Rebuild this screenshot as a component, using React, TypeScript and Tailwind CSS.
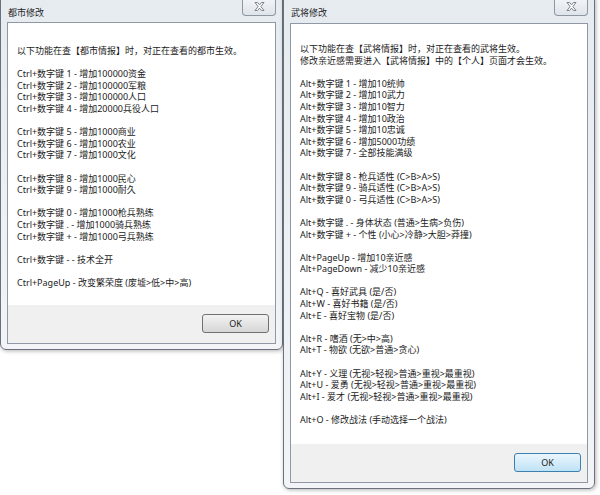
const font = { fontFamily: '"Noto Sans", "Noto Sans CJK SC", sans-serif' };

const cityLines: string[][] = [
  ["以下功能在查【都市情报】时，对正在查看的都市生效。"],
  [
    "Ctrl+数字键 1 - 增加100000资金",
    "Ctrl+数字键 2 - 增加100000军粮",
    "Ctrl+数字键 3 - 增加100000人口",
    "Ctrl+数字键 4 - 增加20000兵役人口",
  ],
  ["Ctrl+数字键 5 - 增加1000商业", "Ctrl+数字键 6 - 增加1000农业", "Ctrl+数字键 7 - 增加1000文化"],
  ["Ctrl+数字键 8 - 增加1000民心", "Ctrl+数字键 9 - 增加1000耐久"],
  [
    "Ctrl+数字键 0 - 增加1000枪兵熟练",
    "Ctrl+数字键 . - 增加1000骑兵熟练",
    "Ctrl+数字键 + - 增加1000弓兵熟练",
  ],
  ["Ctrl+数字键 - - 技术全开"],
  ["Ctrl+PageUp - 改变繁荣度 (废墟>低>中>高)"],
];

const officerLines: string[][] = [
  ["以下功能在查【武将情报】时，对正在查看的武将生效。", "修改亲近感需要进入【武将情报】中的【个人】页面才会生效。"],
  [
    "Alt+数字键 1 - 增加10统帅",
    "Alt+数字键 2 - 增加10武力",
    "Alt+数字键 3 - 增加10智力",
    "Alt+数字键 4 - 增加10政治",
    "Alt+数字键 5 - 增加10忠诚",
    "Alt+数字键 6 - 增加5000功绩",
    "Alt+数字键 7 - 全部技能满级",
  ],
  [
    "Alt+数字键 8 - 枪兵适性 (C>B>A>S)",
    "Alt+数字键 9 - 骑兵适性 (C>B>A>S)",
    "Alt+数字键 0 - 弓兵适性 (C>B>A>S)",
  ],
  ["Alt+数字键 . - 身体状态 (普通>生病>负伤)", "Alt+数字键 + - 个性 (小心>冷静>大胆>莽撞)"],
  ["Alt+PageUp - 增加10亲近感", "Alt+PageDown - 减少10亲近感"],
  ["Alt+Q - 喜好武具 (是/否)", "Alt+W - 喜好书籍 (是/否)", "Alt+E - 喜好宝物 (是/否)"],
  ["Alt+R - 嗜酒 (无>中>高)", "Alt+T - 物欲 (无欲>普通>贪心)"],
  [
    "Alt+Y - 义理 (无视>轻视>普通>重视>最重视)",
    "Alt+U - 爱勇 (无视>轻视>普通>重视>最重视)",
    "Alt+I - 爱才 (无视>轻视>普通>重视>最重视)",
  ],
  ["Alt+O - 修改战法 (手动选择一个战法)"],
];

function CloseButton() {
  return (
    <div className="absolute top-0 right-[6px] w-[34px] h-[21px] flex items-end justify-center pb-[4px] border border-t-0 border-[#8d97a2] rounded-b-[4px] bg-gradient-to-b from-[#f6f8fa] to-[#dfe4ea]">
      <svg width="11" height="9" viewBox="0 0 11 9">
        <path
          d="M1 0.5 L3.6 0.5 L5.5 2.9 L7.4 0.5 L10 0.5 L6.9 4.5 L10 8.5 L7.4 8.5 L5.5 6.1 L3.6 8.5 L1 8.5 L4.1 4.5 Z"
          fill="#ffffff"
          stroke="#6e7781"
          strokeWidth="0.9"
          strokeLinejoin="round"
        />
      </svg>
    </div>
  );
}

function Dialog({
  title,
  groups,
  titleH,
  padTop,
  focused,
  className,
}: {
  title: string;
  groups: string[][];
  titleH: string;
  padTop: string;
  focused?: boolean;
  className: string;
}) {
  return (
    <div
      className={`absolute flex flex-col px-[6px] pb-[5px] border border-[#69727c] rounded-[6px] bg-gradient-to-b from-[#e6ebf0] to-[#f2f4f7] shadow-[1px_1px_4px_rgba(0,0,0,0.3)] ${className}`}
      style={font}
    >
      <div className={`${titleH} shrink-0 pt-[12px] pl-[1px] text-[9px] leading-[12px] text-[#1f1f1f]`}>{title}</div>
      <CloseButton />
      <div className="flex-1 flex flex-col border border-[#8e99a5] bg-white">
        <div className={`flex-1 flex flex-col gap-[11.6px] px-[9px] ${padTop} text-[9px] leading-[11.6px] text-[#1b1b1b]`}>
          {groups.map((g, i) => (
            <div key={i}>
              {g.map((line) => (
                <div key={line} className="whitespace-pre">
                  {line}
                </div>
              ))}
            </div>
          ))}
        </div>
        <div className="h-[38px] shrink-0 flex items-center justify-end pr-[6px] pb-[1px] bg-[#f0f0f0]">
          {focused ? (
            <div className="w-[67px] h-[19px] flex items-center justify-center rounded-[3px] border border-[#3c7fb1] bg-gradient-to-b from-[#eaf6fd] to-[#bfe2f6] text-[9px] text-[#1b1b1b]">
              OK
            </div>
          ) : (
            <div className="w-[67px] h-[19px] flex items-center justify-center rounded-[3px] border border-[#707070] bg-gradient-to-b from-[#f3f3f3] to-[#d6d6d6] text-[9px] text-[#1b1b1b]">
              OK
            </div>
          )}
        </div>
      </div>
    </div>
  );
}

export default function App() {
  return (
    <div className="relative w-[600px] h-[495px] bg-white overflow-hidden">
      <Dialog
        title="都市修改"
        groups={cityLines}
        titleH="h-[27px]"
        padTop="pt-[22px]"
        className="left-0 top-[-6px] w-[283px] h-[356px]"
      />
      <Dialog
        title="武将修改"
        groups={officerLines}
        titleH="h-[28px]"
        padTop="pt-[19px]"
        focused
        className="left-[283px] top-[-6px] w-[312px] h-[495px]"
      />
    </div>
  );
}
